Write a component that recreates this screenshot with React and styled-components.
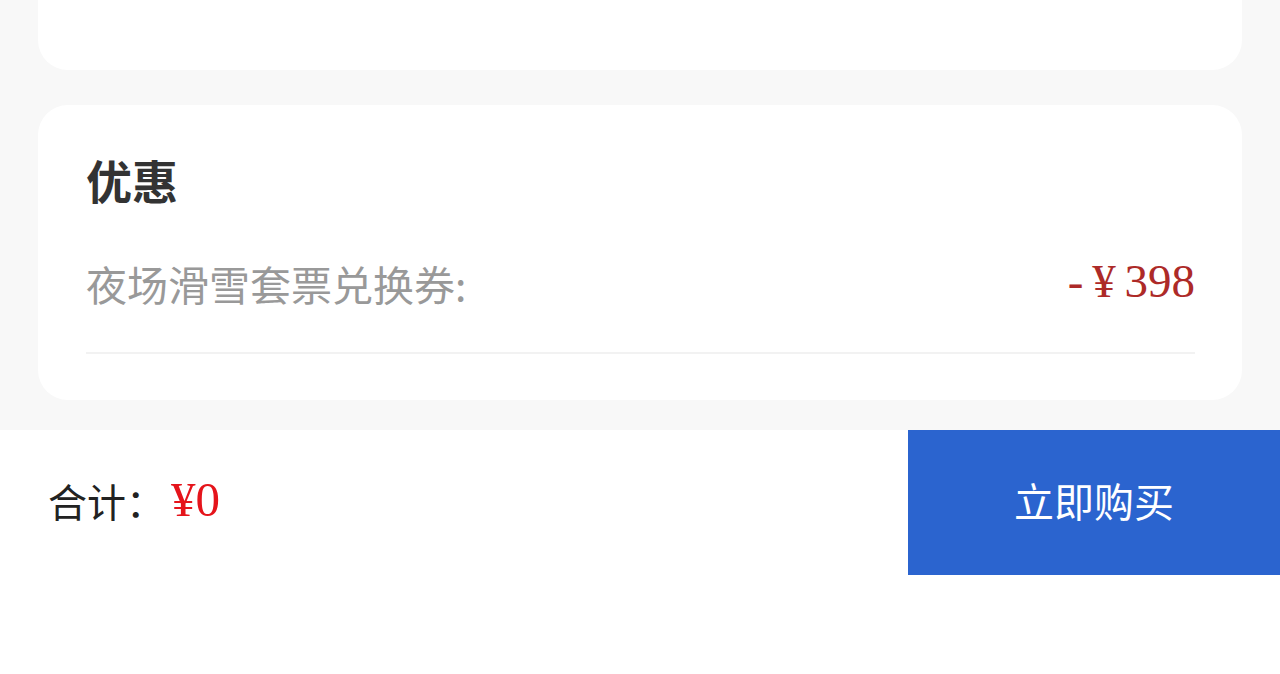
import React from 'react';
import styled, { createGlobalStyle } from 'styled-components';

const Global = createGlobalStyle`
  html, body {
    margin: 0;
    padding: 0;
    background: #ffffff;
    font-family: 'Noto Sans CJK SC', 'Noto Sans', sans-serif;
  }
`;

const Page = styled.div`
  width: 1280px;
  min-height: 674px;
  background: #ffffff;
  display: flex;
  flex-direction: column;
`;

const Content = styled.div`
  background: #f8f8f8;
  padding: 0 38px 30px;
  display: flex;
  flex-direction: column;
  gap: 35px;
`;

const Card = styled.div`
  background: #ffffff;
  border-radius: ${(p) => (p.cut ? '0 0 30px 30px' : '30px')};
  height: ${(p) => p.h}px;
  padding: 0 47px 0 48px;
  box-sizing: border-box;
  display: flex;
  flex-direction: column;
`;

const Title = styled.h3`
  margin: 0;
  padding-top: 44px;
  font-size: 46px;
  line-height: 60px;
  font-weight: 700;
  color: #333333;
`;

const Row = styled.div`
  display: flex;
  justify-content: space-between;
  align-items: center;
  height: 138px;
  margin-top: 5px;
  border-bottom: 2px solid #f2f2f2;
`;

const Label = styled.span`
  font-size: 41px;
  color: #999999;
`;

const Discount = styled.span`
  font-family: 'Liberation Serif', 'DejaVu Serif', serif;
  font-size: 47px;
  color: #ad2a28;
  white-space: pre;
  word-spacing: -3px;
  margin-bottom: 4px;
`;

const Footer = styled.div`
  height: 145px;
  display: flex;
  align-items: center;
  justify-content: space-between;
  background: #ffffff;
`;

const Total = styled.div`
  padding: 0 0 6px 48px;
  display: flex;
  align-items: center;
  font-size: 39px;
  color: #222222;
`;

const Amount = styled.span`
  font-family: 'Liberation Serif', 'DejaVu Serif', serif;
  font-size: 49px;
  color: #e5141b;
  margin-left: 6px;
`;

const BuyButton = styled.button`
  width: 372px;
  height: 145px;
  border: none;
  background: #2b64cf;
  color: #ffffff;
  font-family: 'Noto Sans CJK SC', 'Noto Sans', sans-serif;
  font-size: 40px;
  padding: 0 0 6px;
  cursor: pointer;
`;

export default function App() {
  return (
    <Page>
      <Global />
      <Content>
        <Card cut h={70} />
        <Card h={295}>
          <Title>优惠</Title>
          <Row>
            <Label>夜场滑雪套票兑换券:</Label>
            <Discount>- ¥ 398</Discount>
          </Row>
        </Card>
      </Content>
      <Footer>
        <Total>
          合计：
          <Amount>¥0</Amount>
        </Total>
        <BuyButton>立即购买</BuyButton>
      </Footer>
    </Page>
  );
}
